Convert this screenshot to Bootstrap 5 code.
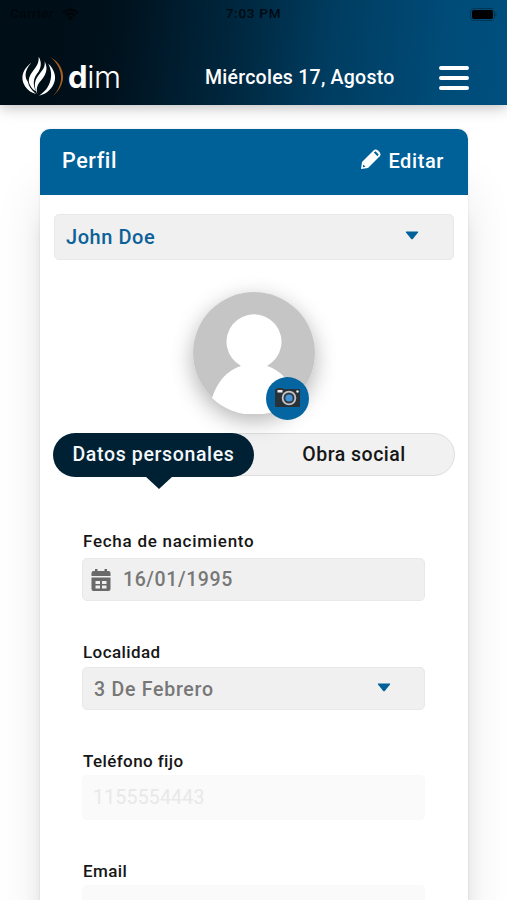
<!DOCTYPE html>
<html lang="es">
<head>
<meta charset="utf-8">
<meta name="viewport" content="width=device-width, initial-scale=1">
<title>Perfil</title>
<link href="https://cdn.jsdelivr.net/npm/bootstrap@5.3.0/dist/css/bootstrap.min.css" rel="stylesheet">
<style>
html, body { height: 900px; overflow: hidden; }
body { font-family: Roboto, "Liberation Sans", sans-serif; font-weight: 500; color: #161616; background: #fff; line-height: 1; white-space: nowrap; }
svg { display: block; flex: none; }
.topbar { height: 105px; background: linear-gradient(97deg, #000e17 12%, #00121e 24%, #002a43 49%, #003d61 65%, #004c79 88%, #004f7e); box-shadow: 0 2px 14px rgba(0,0,0,.28); z-index: 2; }
.status { height: 28px; font-size: 13.5px; padding: 0 10px 0 10px; color: #000a12; }
.status > * { flex: 1 1 0; }
.clock { letter-spacing: .75px; }
.carrier { color: #00070c; letter-spacing: .4px; }
.mainbar { height: 77px; padding: 22px 38px 0 22px; color: #fff; }
.brand { width: 183px; margin-top: -2px; }
.brand-name { font: 300 31px/1 Inter, "Liberation Sans", sans-serif; letter-spacing: -.4px; margin: 0 0 0 4px; }
.brand-name b { font-weight: 700; }
.today { font-size: 19.5px; letter-spacing: .25px; width: 234px; }
.panel { width: 428px; height: 771px; margin: 24px 0 0 40px; border: 0; border-radius: 10px 10px 0 0; box-shadow: 0 60px 50px rgba(0,0,0,.09), 0 90px 18px rgba(0,0,0,.07), 0 0 3px rgba(0,0,0,.1); }
.panel-head { height: 66px; background: #006198; color: #fff; border-radius: 10px 10px 0 0; padding: 0 24px 3px 22px; }
.title-text { font-size: 21.5px; letter-spacing: .6px; }
.edit-text { font-size: 20px; letter-spacing: .6px; margin-left: -1px; }
.field { background: #f0f0f0; border: 1px solid #e8e8e8; border-radius: 5px; height: 43px; color: #777; padding: 0 41px 0 11px; font-size: 19.5px; }
.patient { height: 46px; margin: 19px 14px 0; color: #0c6198; padding: 0 34px 0 11px; font-size: 20px; letter-spacing: .55px; }
.locality { padding-right: 33px; letter-spacing: .75px; padding-top: 2px; }
.birth { letter-spacing: .6px; }
.faded { background: #fafafa; border-color: #f9f9f9; color: #e8e8e8; height: 45px; font-weight: 400; letter-spacing: .2px; padding-left: 10px; }
.clipped { height: 15px; border-radius: 5px 5px 0 0; border-bottom: 0; }
.avatar { width: 122px; height: 122px; margin: 32px 0 0 153px; border-radius: 50%; box-shadow: 0 7px 22px rgba(0,0,0,.3); }
.camera { right: 6px; top: 85px; }
.tabs-pill { height: 43px; margin: 19px 13px 0 14px; border-radius: 22px; background: #f1f1f1; border: 1px solid #dedede; font-size: 19.5px; }
.tab-on { width: 201px; height: 44px; margin: -1px 0 0 -2px; border-radius: 22px; background: #002134; color: #f4f8fb; letter-spacing: .65px; }
.tab-on::after { content: ""; position: absolute; left: 92px; top: 43px; border: 14px solid transparent; border-top: 13px solid #002134; border-bottom: 0; }
.tab-off { letter-spacing: .5px; }
.form-area { margin: 57px 43px 0 42px; }
.caption { font-size: 17px; height: 17px; margin: 43px 0 6px 1px; letter-spacing: .4px; }
.caption-birth { margin: 0 0 8px 1px; letter-spacing: .73px; }
.caption-faded { margin-bottom: 5px; }
</style>
<script src="https://cdn.jsdelivr.net/npm/bootstrap@5.3.0/dist/js/bootstrap.bundle.min.js"></script>
</head>
<body>
<header class="topbar position-relative">
  <div class="status d-flex align-items-center">
    <div class="carrier d-flex align-items-center gap-2"><span>Carrier</span>
      <svg width="17" height="13" viewBox="0 0 17 13"><path d="M8.500 12.500 11.300 9.500Q8.500 7 5.700 9.500ZM4.600 8.300Q8.500 4.800 12.400 8.300L14 6.600Q8.500 1.800 3 6.600ZM2 5.600Q8.500-.2 15 5.600L16.600 3.900Q8.500-3 .4 3.900Z" fill="#00060a"/></svg>
    </div>
    <div class="clock text-center">7:03 PM</div>
    <div class="d-flex justify-content-end"><svg width="27" height="13" viewBox="0 0 27 13"><rect x=".5" y=".5" width="24" height="12" rx="3.500" fill="none" stroke="#003654"/><rect x="2" y="2" width="21" height="9" rx="2" fill="#000"/><path d="M25.500 4.500q2 2 0 4z" fill="#003654"/></svg></div>
  </div>
  <div class="mainbar d-flex align-items-center">
    <div class="brand d-flex align-items-center">
      <svg width="42" height="41" viewBox="66 167 126 123">
        <g fill="#fff">
          <path d="M94 187C72 203 60 227 72 252C80 268 92 277 108 281C93 268 85 256 84 245C71 229 76 206 94 187Z"/>
          <path d="M116 169C117 187 111 196 101 209C89 225 82 238 90 254C95 264 101 269 108 273C96 250 102 232 112 219C124 203 126 186 116 169Z"/>
          <path d="M134 183C136 199 130 207 119 220C104 238 99 255 112 281C107 261 114 250 125 238C140 221 144 203 134 183Z"/>
          <path d="M145 190C160 204 169 224 164 242C159 263 141 281 117 286C137 272 144 262 150 245C156 225 154 208 145 190Z"/>
        </g>
        <path d="M151 170C199 197 202 252 159 287C194 250 191 204 151 170Z" fill="#a85f20"/>
      </svg>
      <span class="brand-name"><b>d</b>im</span>
    </div>
    <div class="today">Miércoles 17, Agosto</div>
    <svg width="30" height="26" viewBox="0 0 30 26"><path d="M2 3H28M2 13H28M2 23H28" stroke="#fff" stroke-width="4" stroke-linecap="round"/></svg>
  </div>
</header>

<main class="panel card">
  <div class="panel-head d-flex align-items-center justify-content-between">
    <span class="title-text">Perfil</span>
    <span class="d-flex align-items-center gap-2">
      <svg class="mb-1" width="20" height="20" viewBox="0 0 20 20"><path d="M0 20 1 13 12.500 1.500Q14.500-.5 17 1.500L18.500 3Q20.500 5.500 18.500 7.500L7 19Z" fill="#fff"/><path d="m12.800 3.500 1.700-1.200 3.200 3.200-1.200 1.700zM2.300 15.500l2.200 2.200-2.600.5z" fill="#006198"/></svg>
      <span class="edit-text">Editar</span>
    </span>
  </div>

  <div class="field patient d-flex align-items-center justify-content-between"><span>John Doe</span>
    <svg class="mb-1" width="14" height="9" viewBox="0 0 14 9"><path d="M1.500.5h11q1.300 0 .5 1L8 7.700q-1 1.200-2 0L1 1.500q-.8-1 .5-1z" fill="#006198"/></svg></div>

  <div class="avatar position-relative">
    <svg width="122" height="122" viewBox="0 0 122 122"><circle cx="61" cy="61" r="61" fill="#c5c5c5"/><path d="M19 106C25 88 35 78 48 74A27.500 27.500 0 1 1 74 74C87 78 97 88 103 106A61 61 0 0 1 19 106Z" fill="#fff"/></svg>
    <svg class="camera position-absolute" width="43" height="43" viewBox="0 0 43 43"><circle cx="21.500" cy="21.500" r="21.500" fill="#0465a0"/><rect x="9" y="12" width="25" height="18" rx="1" fill="#293238"/><path d="M11 11h6v3h-6z" fill="#333"/><path d="M11.500 13h5v2.500h-5z" fill="#f2f2f2"/><circle cx="31.500" cy="14.500" r="1.200" fill="#f2f2f2"/><circle cx="23" cy="21" r="7.300" fill="#333"/><circle cx="23" cy="21" r="6.400" fill="#333b42" stroke="#c3c6c8" stroke-width="1.800"/><circle cx="23" cy="21" r="3.600" fill="#4494dc"/></svg>
  </div>

  <div class="tabs-pill d-flex">
    <div class="tab-on position-relative d-flex align-items-center justify-content-center">Datos personales</div>
    <div class="tab-off flex-fill d-flex align-items-center justify-content-center">Obra social</div>
  </div>

  <div class="form-area">
    <div class="caption caption-birth">Fecha de nacimiento</div>
    <div class="field birth d-flex align-items-center ps-2">
      <svg width="20" height="24" viewBox="0 0 20 24"><path d="M.5 8V5q0-2 2-2H4V1h2.500v2h7V1H16v2h1.500q2 0 2 2v3zM.5 9.500h19V21q0 2-2 2h-15q-2 0-2-2z" fill="#696969"/><path d="M4.500 13h4.500v3H4.500zM11 13h4.500v3H11zM4.500 17.500h4.500v3H4.500zM11 17.500h4.500v3H11z" fill="#f0f0f0"/></svg>
      <span class="ms-2 ps-1">16/01/1995</span>
    </div>
    <div class="caption">Localidad</div>
    <div class="field locality d-flex align-items-center justify-content-between"><span>3 De Febrero</span>
      <svg class="mb-1" width="14" height="9" viewBox="0 0 14 9"><path d="M1.500.5h11q1.300 0 .5 1L8 7.700q-1 1.200-2 0L1 1.500q-.8-1 .5-1z" fill="#006198"/></svg></div>
    <div class="caption caption-faded">Teléfono fijo</div>
    <div class="field faded d-flex align-items-center">1155554443</div>
    <div class="caption caption-faded">Email</div>
    <div class="field faded clipped"></div>
  </div>
</main>
</body>
</html>
